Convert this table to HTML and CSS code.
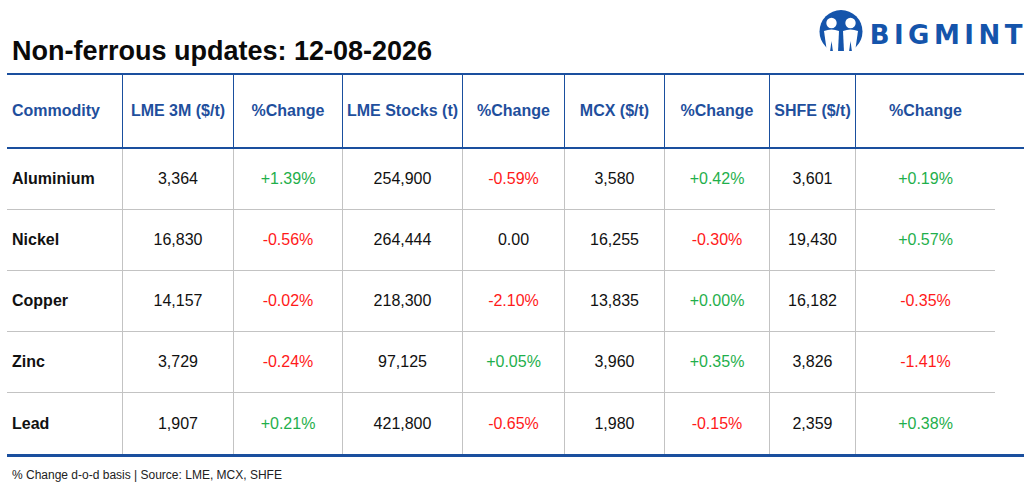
FILE: index.html
```html
<!DOCTYPE html>
<html lang="en">
<head>
<meta charset="utf-8">
<title>Non-ferrous updates</title>
<link rel="stylesheet" href="styles.css">
</head>
<body>
<div class="page">
  <header class="top">
    <h1 class="title">Non-ferrous updates: 12-08-2026</h1>
    <div class="logo">
      <svg class="logo-mark" viewBox="0 0 44 44" width="44" height="44" aria-hidden="true">
        <defs>
          <clipPath id="lc"><rect x="0" y="0" width="44" height="43"/></clipPath>
        </defs>
        <g clip-path="url(#lc)">
          <circle cx="22" cy="23.5" r="21.5" fill="#1454ab"/>
          <circle cx="12.5" cy="15" r="5.2" fill="#fff"/>
          <circle cx="31.5" cy="15" r="5.2" fill="#fff"/>
          <path d="M5 23 Q12.5 20 20 23 L19 44 L8 44 Z" fill="#fff"/>
          <path d="M24 23 Q31.5 20 39 23 L36 44 L25 44 Z" fill="#fff"/>
          <path d="M12.5 33 L14 44 L11 44 Z" fill="#1454ab"/>
          <path d="M31.5 33 L33 44 L30 44 Z" fill="#1454ab"/>
        </g>
      </svg>
      <span class="logo-text">BIGMINT</span>
    </div>
  </header>

  <div class="table">
    <div class="row head">
      <div class="cell first">Commodity</div>
      <div class="cell">LME 3M ($/t)</div>
      <div class="cell">%Change</div>
      <div class="cell">LME Stocks (t)</div>
      <div class="cell">%Change</div>
      <div class="cell">MCX ($/t)</div>
      <div class="cell">%Change</div>
      <div class="cell">SHFE ($/t)</div>
      <div class="cell">%Change</div>
      <div class="cell pad"></div>
    </div>
    <div class="row">
      <div class="cell first">Aluminium</div>
      <div class="cell">3,364</div>
      <div class="cell up">+1.39%</div>
      <div class="cell">254,900</div>
      <div class="cell down">-0.59%</div>
      <div class="cell">3,580</div>
      <div class="cell up">+0.42%</div>
      <div class="cell">3,601</div>
      <div class="cell up">+0.19%</div>
      <div class="cell pad"></div>
    </div>
    <div class="row">
      <div class="cell first">Nickel</div>
      <div class="cell">16,830</div>
      <div class="cell down">-0.56%</div>
      <div class="cell">264,444</div>
      <div class="cell">0.00</div>
      <div class="cell">16,255</div>
      <div class="cell down">-0.30%</div>
      <div class="cell">19,430</div>
      <div class="cell up">+0.57%</div>
      <div class="cell pad"></div>
    </div>
    <div class="row">
      <div class="cell first">Copper</div>
      <div class="cell">14,157</div>
      <div class="cell down">-0.02%</div>
      <div class="cell">218,300</div>
      <div class="cell down">-2.10%</div>
      <div class="cell">13,835</div>
      <div class="cell up">+0.00%</div>
      <div class="cell">16,182</div>
      <div class="cell down">-0.35%</div>
      <div class="cell pad"></div>
    </div>
    <div class="row">
      <div class="cell first">Zinc</div>
      <div class="cell">3,729</div>
      <div class="cell down">-0.24%</div>
      <div class="cell">97,125</div>
      <div class="cell up">+0.05%</div>
      <div class="cell">3,960</div>
      <div class="cell up">+0.35%</div>
      <div class="cell">3,826</div>
      <div class="cell down">-1.41%</div>
      <div class="cell pad"></div>
    </div>
    <div class="row last">
      <div class="cell first">Lead</div>
      <div class="cell">1,907</div>
      <div class="cell up">+0.21%</div>
      <div class="cell">421,800</div>
      <div class="cell down">-0.65%</div>
      <div class="cell">1,980</div>
      <div class="cell down">-0.15%</div>
      <div class="cell">2,359</div>
      <div class="cell up">+0.38%</div>
      <div class="cell pad"></div>
    </div>
  </div>

  <p class="note">% Change d-o-d basis | Source: LME, MCX, SHFE</p>
</div>
</body>
</html>
```

FILE: styles.css
```css
* { box-sizing: border-box; }

html, body {
  margin: 0;
  padding: 0;
  background: #ffffff;
}

body {
  font-family: "Liberation Sans", Arial, sans-serif;
  color: #111111;
  width: 1035px;
  height: 490px;
  overflow: hidden;
}

.top {
  display: flex;
  justify-content: space-between;
  align-items: flex-start;
  height: 73px;
  padding: 0 12px 0 12px;
}

.title {
  margin: 38px 0 0 0;
  font-size: 27px;
  line-height: 27px;
  font-weight: 700;
  color: #0a0a0a;
  letter-spacing: 0;
}

.logo {
  display: flex;
  align-items: flex-start;
  gap: 7px;
}

.logo-mark {
  display: block;
  margin-top: 8px;
}

.logo-text {
  margin-top: 22px;
  margin-right: -4px;
  font-family: "DejaVu Sans", "Liberation Sans", sans-serif;
  font-size: 26px;
  line-height: 27px;
  font-weight: 700;
  letter-spacing: 4.5px;
  color: #1454ab;
}

.table {
  margin-left: 7px;
  width: 1017px;
  border-bottom: 3px solid #1a4f9e;
}

.row {
  display: grid;
  grid-template-columns: 115px 111px 109px 120px 102px 100px 105px 86px 140px 29px;
  height: 61px;
}

.cell {
  display: flex;
  align-items: center;
  justify-content: center;
  font-size: 16px;
  border-left: 1px solid #c3c3c3;
  border-bottom: 1px solid #c3c3c3;
  white-space: nowrap;
}

.cell.first {
  justify-content: flex-start;
  padding-left: 5px;
  border-left: none;
  font-weight: 700;
}

.cell.pad {
  border-left: none;
  border-bottom: none;
}

.row.last .cell {
  border-bottom: none;
}

.row.head {
  height: 76px;
  border-top: 2px solid #1a4f9e;
  border-bottom: 2px solid #1a4f9e;
}

.row.head .cell {
  border-bottom: none;
  border-left: 1.5px solid #1a4f9e;
  font-weight: 700;
  color: #1f4f9d;
}

.row.head .cell.first,
.row.head .cell.pad {
  border-left: none;
}

.up { color: #1faf4c; }
.down { color: #ff1a1a; }

.note {
  margin: 10px 0 0 12px;
  font-size: 12px;
  line-height: 16px;
  color: #222222;
}
```
